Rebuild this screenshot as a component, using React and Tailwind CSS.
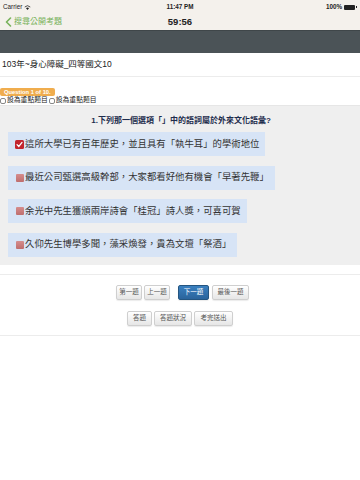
import React from 'react';

const options = [
    { text: '這所大學已有百年歷史，並且具有「執牛耳」的學術地位', checked: true },
    { text: '最近公司甄選高級幹部，大家都看好他有機會「早著先鞭」', checked: false },
    { text: '余光中先生獲頒兩岸詩會「桂冠」詩人獎，可喜可賀', checked: false },
    { text: '久仰先生博學多聞，藻采煥發，貴為文壇「祭酒」', checked: false },
];

const Btn = ({ children, primary, className = '' }) => (
    <button
        className={
            'h-[15px] rounded-[2px] border text-[6.5px] leading-none flex items-center justify-center shadow-[0_1px_1px_rgba(0,0,0,0.08)] ' +
            (primary
                ? 'bg-gradient-to-b from-[#3a80c0] to-[#2a649c] border-[#245580] text-white '
                : 'bg-gradient-to-b from-white to-[#e6e6e6] border-[#cfcfcf] text-[#555] ') +
            className
        }
    >
        {children}
    </button>
);

export default function App() {
    return (
        <div className="w-[360px] h-[480px] bg-white overflow-hidden font-['Liberation_Sans','Noto_Sans_CJK_TC',sans-serif] text-[#222]">
            {/* status bar */}
            <div className="h-[14px] bg-[#f4f1ec] grid grid-cols-3 items-center px-[3px] text-[6.3px] text-[#222]">
                <div className="flex items-center gap-[2px]">
                    <span>Carrier</span>
                    <svg width="7" height="5" viewBox="0 0 14 10">
                        <path d="M7 10 L4 6.5 A4.5 4.5 0 0 1 10 6.5 Z" fill="#222" />
                        <path d="M1.5 4 A8 8 0 0 1 12.5 4" stroke="#222" strokeWidth="1.6" fill="none" />
                    </svg>
                </div>
                <div className="text-center font-bold">11:47 PM</div>
                <div className="flex items-center justify-end gap-[2px] font-bold">
                    <span>100%</span>
                    <span className="w-[11px] h-[5px] bg-[#222] rounded-[1px]"></span>
                    <span className="w-[1px] h-[2px] bg-[#222] -ml-[1px]"></span>
                </div>
            </div>

            {/* nav bar */}
            <div className="h-[16px] bg-[#f4f1ec] grid grid-cols-3 items-center px-[5px]">
                <div className="flex items-center gap-[2px] text-[#77b25a] text-[8px]">
                    <svg width="7" height="10" viewBox="0 0 7 10">
                        <path d="M5.5 1 L1.5 5 L5.5 9" stroke="#77b25a" strokeWidth="1.6" fill="none" strokeLinecap="round" strokeLinejoin="round" />
                    </svg>
                    <span>搜尋公開考題</span>
                </div>
                <div className="text-center text-[9.5px] font-bold text-[#222]">59:56</div>
                <div></div>
            </div>

            {/* dark band */}
            <div className="h-[23px] bg-[#4b5357] border-t border-[#3f4649]"></div>

            {/* title */}
            <div className="h-[24px] flex items-center px-[2px] text-[8.5px] border-b border-[#ececec]">
                103年~身心障礙_四等國文10
            </div>

            <div className="mt-[10px] h-[9px] flex items-center">
                <span className="h-[8px] px-[4px] rounded-[2px] bg-[#f0ad4e] text-white text-[5.8px] font-bold leading-[8px] whitespace-nowrap">
                    Question 1 of 10.
                </span>
            </div>

            <div className="h-[9px] flex items-center text-[6.8px] text-[#222]">
                <span className="w-[6px] h-[6px] rounded-[2px] border border-[#888] bg-white mr-[1px]"></span>
                <span>設為重點題目</span>
                <span className="w-[6px] h-[6px] rounded-[2px] border border-[#888] bg-white mx-[1px]"></span>
                <span>設為重點題目</span>
            </div>

            {/* question area */}
            <div className="bg-[#efefef] pt-[10px] pb-[8px] border-t border-[#e6e6e6]">
                <div className="text-center text-[8px] font-bold text-[#1d2c4c] leading-[10px] pl-[2px]">
                    1.下列那一個選項「」中的語詞屬於外來文化語彙?
                </div>
                <div className="mt-[6px] flex flex-col items-start gap-[9.5px] pl-[8px]">
                    {options.map((o, i) => (
                        <div key={i} className="h-[24px] bg-[#d7e4f6] flex items-center pl-[7px] pr-[6px] text-[9.4px] text-[#333]">
                            {o.checked ? (
                                <span className="w-[9px] h-[9px] rounded-[1.5px] bg-[#c2252e] flex items-center justify-center mr-[1px]">
                                    <svg width="7" height="7" viewBox="0 0 10 10">
                                        <path d="M1.5 5.2 L4 7.8 L8.6 2" stroke="white" strokeWidth="1.8" fill="none" strokeLinecap="round" />
                                    </svg>
                                </span>
                            ) : (
                                <span className="w-[8px] h-[8px] rounded-[1px] bg-gradient-to-b from-[#d58d8d] to-[#bf6e6e] mx-[1px]"></span>
                            )}
                            <span>{o.text}</span>
                        </div>
                    ))}
                </div>
            </div>

            {/* buttons */}
            <div className="mt-[9px] border-t border-[#ececec] pt-[10px]">
                <div className="flex justify-center pl-[5px]">
                    <Btn className="w-[26px]">第一題</Btn>
                    <Btn className="w-[26px] ml-[2px]">上一題</Btn>
                    <Btn primary className="w-[31px] ml-[8px]">下一題</Btn>
                    <Btn className="w-[37px] ml-[3px]">最後一題</Btn>
                </div>
                <div className="flex justify-center mt-[11px]">
                    <Btn className="w-[25px]">答題</Btn>
                    <Btn className="w-[38px] ml-[2px]">答題狀況</Btn>
                    <Btn className="w-[39px] ml-[2px]">考完送出</Btn>
                </div>
                <div className="mt-[9px] border-t border-[#ececec]"></div>
            </div>
        </div>
    );
}
